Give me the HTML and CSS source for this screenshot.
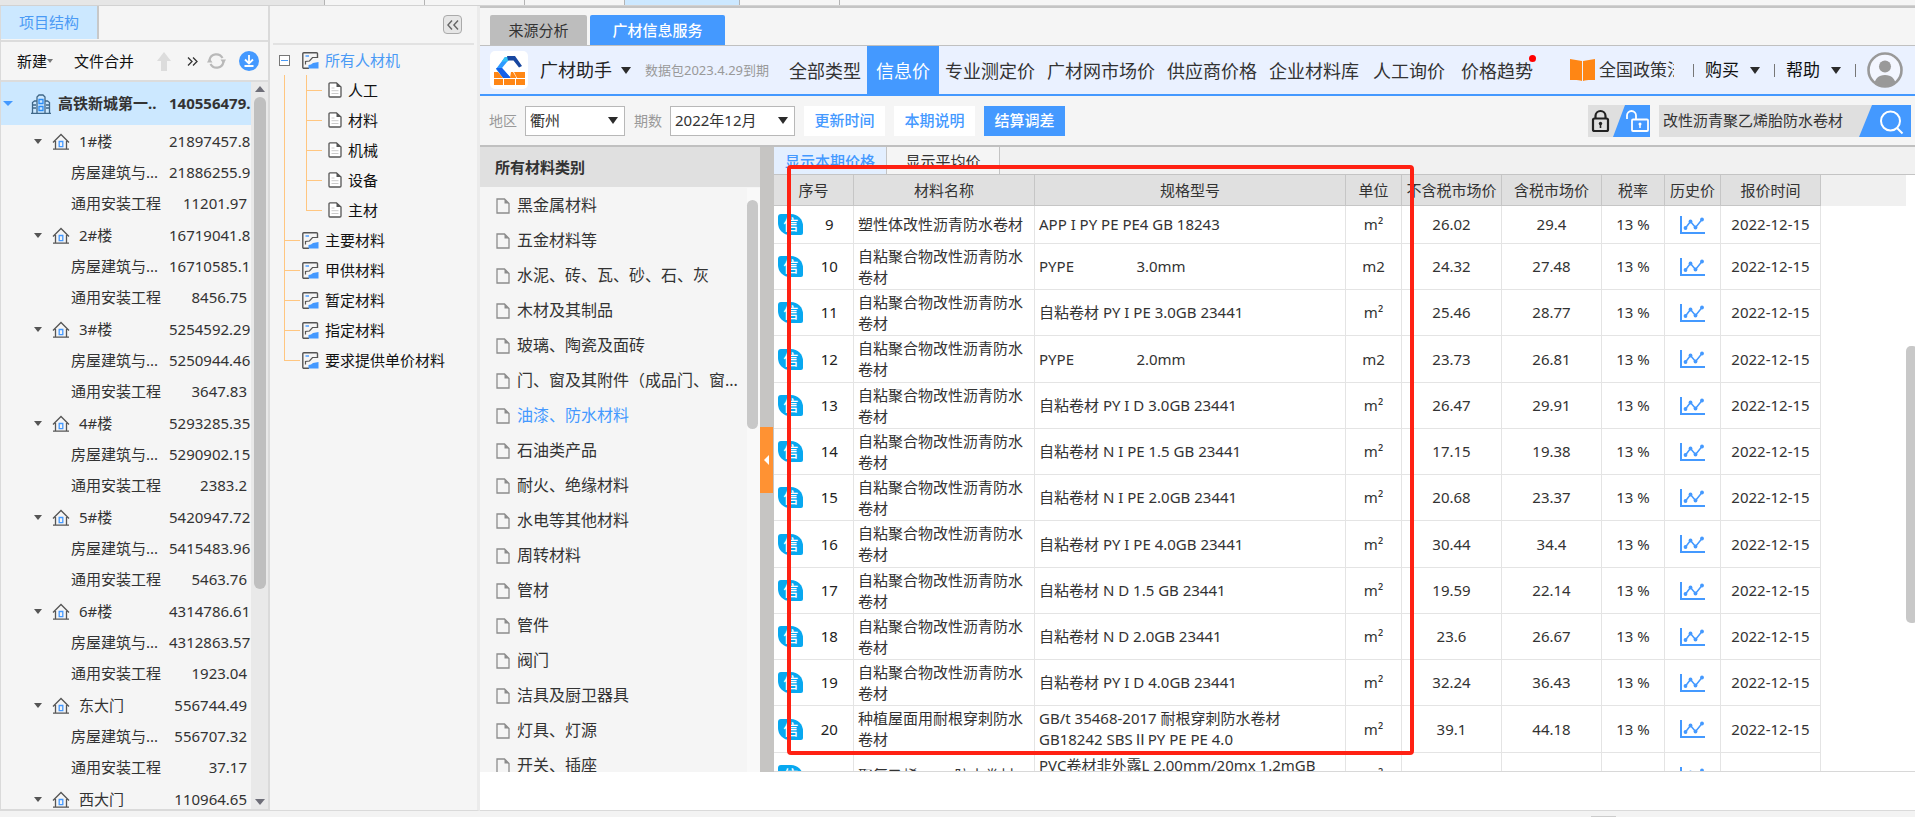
FILE: index.html
```html
<!DOCTYPE html>
<html lang="zh-CN">
<head>
<meta charset="utf-8">
<title>广材助手</title>
<link rel="stylesheet" href="styles.css">
</head>
<body>
<svg class="sprite" aria-hidden="true">
  <symbol id="i-house" viewBox="0 0 18 17"><path d="M1 9.5 9 1.5l8 8M3.5 8v8M14.5 8v8M1 16.2h16" fill="none" stroke="#555" stroke-width="1.3"/><path d="M7.2 8.5h3.6v5.2H7.2z" fill="none" stroke="#4499ff" stroke-width="1.3"/></symbol>
  <symbol id="i-tower" viewBox="0 0 20 20"><path d="M6 19V3l2-2h4l2 2v16M1.5 19V8.500l2-1.500H6M14 7h2.500l2 1.500V19M0 19.300h20M2 11h3M2 14h3M15 11h3M15 14h3" fill="none" stroke="#3f6788" stroke-width="1.300"/><path d="M8 5.500h4v4H8zM8 12.500h4v4H8z" fill="none" stroke="#2b8cf5" stroke-width="1.300"/></symbol>
  <symbol id="i-page" viewBox="0 0 14 16"><path d="M2 .8h6.500L13 5v9a1 1 0 0 1-1 1H2a1 1 0 0 1-1-1V1.800a1 1 0 0 1 1-1z" fill="#fff" stroke="#555" stroke-width="1.300"/><path d="M8.500.8V5H13z" fill="#555"/><path d="M3.500 6h3M3.500 8.700h7M3.500 11.500h7" stroke="#ccc"/></symbol>
  <symbol id="i-file" viewBox="0 0 14 16"><path d="M1 1h7.500L13 5.500V15H1z" fill="none" stroke="#8c8c8c" stroke-width="1.300"/><path d="M8.500 1v4.500H13z" fill="#8c8c8c"/></symbol>
  <symbol id="i-report" viewBox="0 0 17 17"><path d="M15.500 6V1.800a1 1 0 0 0-1-1H1.800a1 1 0 0 0-1 1v13.400a1 1 0 0 0 1 1H7" fill="none" stroke="#555" stroke-width="1.400"/><path d="M3.500 4h3.500" stroke="#4499ff" stroke-width="1.400"/><path d="M3.500 12.500V9.500l4-.500 3-3.500h5" fill="none" stroke="#555" stroke-width="1.200"/><path d="M6.500 16.500V13l2.500-.500 2-1.500 5.500-1v6.500z" fill="#4499ff"/></symbol>
  <symbol id="i-trend" viewBox="0 0 25 18"><path d="M1 0v17h24" fill="none" stroke="#4499ff" stroke-width="2"/><path d="m5.500 12 5-6.500 5 6 6.500-8" fill="none" stroke="#4499ff" stroke-width="1.500"/><g fill="#4499ff"><circle cx="5.500" cy="12" r="1.900"/><circle cx="10.500" cy="5.500" r="1.900"/><circle cx="15.500" cy="11.500" r="1.900"/><circle cx="22" cy="3.500" r="1.900"/></g></symbol>
</svg>

<div class="window-tabs"><span class="wt-0"></span><span class="wt-1"></span><span class="wt-1"></span><span class="wt-1"></span><span class="wt-2"></span><span class="wt-1"></span></div>

<main class="app">
  <aside class="project">
    <div class="project-tabs"><button class="project-tab">项目结构</button></div>
    <div class="project-tools">
      <button class="tool new">新建<i class="caret-small"></i></button>
      <button class="tool merge">文件合并</button>
      <button class="tool up" aria-label="上移"><svg width="14" height="19" viewBox="0 0 14 19"><path d="M7 0l7 9h-4v10H4V9H0z" fill="#dcdcdc"/></svg></button>
      <button class="tool more" aria-label="更多"><svg width="11" height="9" viewBox="0 0 11 9"><path d="m1 .5 4 4-4 4M6 .5l4 4-4 4" fill="none" stroke="#333" stroke-width="1.300"/></svg></button>
      <button class="tool sync" aria-label="刷新"><svg width="19" height="18" viewBox="0 0 19 18"><path d="M2.500 8a7 7 0 0 1 13-2M16.500 10a7 7 0 0 1-13 2" fill="none" stroke="#b9b9b9" stroke-width="2.200"/><path d="M0 10.500 2.500 6l3 4.500zM13.500 7.500h5.500L16.500 12z" fill="#b9b9b9"/></svg></button>
      <button class="tool down" aria-label="下载"><svg width="20" height="20" viewBox="0 0 20 20"><circle cx="10" cy="10" r="10" fill="#4499ff"/><path d="M10 4v8M6 8.500l4 4 4-4M5.500 15h9" fill="none" stroke="#fff" stroke-width="1.800"/></svg></button>
    </div>
    <div class="project-body">
      <div class="project-rows" id="project-rows">
        <div class="root-row"><i class="caret blue"></i><svg width="20" height="20"><use href="#i-tower"/></svg><span class="root-name">高铁新城第一..</span><span class="amount">140556479.</span></div>
      </div>
      <div class="project-scroll"><i class="arrow-up"></i><i class="thumb"></i><i class="arrow-down"></i></div>
    </div>
  </aside>

  <aside class="kinds">
    <div class="kinds-head"><button class="collapse" aria-label="收起"><svg width="12" height="10" viewBox="0 0 12 10"><path d="M5 .5.9 5 5 9.500M11 .5 6.900 5 11 9.500" fill="none" stroke="#666" stroke-width="1.400"/></svg></button></div>
    <div class="kind-root"><button class="minus" aria-label="折叠"></button><svg width="17" height="17"><use href="#i-report"/></svg><span>所有人材机</span></div>
    <div id="kind-rows"></div>
  </aside>

  <section class="service">
    <div class="service-tabs"><button class="stab gray">来源分析</button><button class="stab active">广材信息服务</button></div>
    <header class="bar">
      <span class="logo"><svg width="31" height="29" viewBox="0 0 31 29"><path d="M11 1h6L8 12l9 10h-8L2 13z" fill="#2f9bff"/><path d="M11 1h6l-3.500 4.500H7.700z" fill="#35c3f5"/><path d="M8 12h-6l7 10h8z" fill="#1560e8"/><path d="M13 0h8l7 10-3 1.500-5.500-7H14z" fill="#1746a0"/><g fill="#ff8614"><path d="M0 16h4l5 6H0zM20 16h11v6H23zM17 16h2l3 5v1h-6z"/><path d="M0 23h9v6H0zM10 23h11v6H10zM22 23h9v6h-9z"/></g></svg></span>
      <button class="brand">广材助手<i class="caret"></i></button>
      <span class="expiry">数据包2023.4.29到期</span>
      <nav class="nav">
        <a href="#">全部类型</a><a href="#" class="on">信息价</a><a href="#">专业测定价</a><a href="#">广材网市场价</a><a href="#">供应商价格</a><a href="#">企业材料库</a><a href="#" class="loose">人工询价</a><a href="#" class="loose">价格趋势<i class="dot"></i></a>
      </nav>
      <div class="account">
        <svg class="book" width="25" height="22" viewBox="0 0 25 22"><path d="M0 0c4 1 8 1 12 2v20c-4-1.500-8-1-12-1zM25 0c-4 1-8 1-12 2v20c4-1.500 8-1 12-1z" fill="#ff8614"/></svg>
        <a href="#" class="policy">全国政策法规</a>
        <i class="sep"></i><button class="menu">购买<i class="caret"></i></button>
        <i class="sep"></i><button class="menu">帮助<i class="caret"></i></button>
        <i class="sep"></i>
        <svg class="avatar" width="36" height="36" viewBox="0 0 36 36"><defs><clipPath id="face"><circle cx="18" cy="18" r="16"/></clipPath></defs><circle cx="18" cy="18" r="16.500" fill="#f3f6ff" stroke="#999" stroke-width="2.600"/><g fill="#999" clip-path="url(#face)"><circle cx="18" cy="14.500" r="6"/><path d="M7 36c0-9 4-13 11-13s11 4 11 13z"/></g></svg>
      </div>
    </header>
    <div class="filters">
      <label for="region">地区</label>
      <span class="pick region"><select id="region"><option>衢州</option></select><i class="caret"></i></span>
      <label for="period">期数</label>
      <span class="pick period"><select id="period"><option>2022年12月</option></select><i class="caret"></i></span>
      <button class="act">更新时间</button><button class="act">本期说明</button><button class="act solid">结算调差</button>
      <button class="locks" aria-label="锁定"><svg width="62" height="32" viewBox="0 0 62 32"><path d="M37 0h25v32H25z" fill="#4499ff"/><g fill="none" stroke="#222" stroke-width="2.200"><rect x="5" y="13.500" width="15" height="12.500" rx="1.500"/><path d="M7.500 13.500V11a5 5 0 0 1 10 0v2.500"/></g><circle cx="12.500" cy="18.500" r="1.700" fill="#222"/><path d="M12.500 19v4" stroke="#222" stroke-width="1.600"/><g fill="none" stroke="#fff" stroke-width="1.800"><rect x="44" y="14.500" width="16" height="11.500" rx="1"/><path d="M39 14v-3.500a4.500 4.500 0 0 1 9 0v4"/></g><circle cx="52" cy="19" r="1.500" fill="#fff"/><path d="M52 19v4" stroke="#fff" stroke-width="1.500"/></svg></button>
      <span class="search"><input type="text" aria-label="搜索材料" value="改性沥青聚乙烯胎防水卷材"><button aria-label="搜索"><svg width="52" height="32" viewBox="0 0 52 32"><path d="M13 0h39v32H0z" fill="#4499ff"/><circle cx="31.500" cy="16" r="9.500" fill="none" stroke="#fff" stroke-width="2"/><path d="m38 23 5.500 5.500" stroke="#fff" stroke-width="2"/></svg></button></span>
    </div>
    <div class="work">
      <div class="cats">
        <h2>所有材料类别</h2>
        <div class="cats-body"><ul id="cats"></ul><div class="cats-scroll"><i></i></div></div>
      </div>
      <div class="split"><button aria-label="收起分类"><i></i></button></div>
      <div class="prices">
        <div class="price-tabs"><button class="on">显示本期价格</button><button>显示平均价</button></div>
        <div class="price-body">
          <table>
            <colgroup><col class="c-no"><col class="c-name"><col class="c-spec"><col class="c-unit"><col class="c-price"><col class="c-price"><col class="c-rate"><col class="c-hist"><col class="c-date"></colgroup>
            <thead><tr><th>序号</th><th>材料名称</th><th>规格型号</th><th>单位</th><th>不含税市场价</th><th>含税市场价</th><th>税率</th><th>历史价</th><th>报价时间</th></tr></thead>
            <tbody id="prices"></tbody>
          </table>
          <div class="head-fill"></div>
          <div class="price-scroll"><i></i></div>
        </div>
        <div class="highlight"></div>
      </div>
    </div>
  </section>
</main>
<footer class="status"><i></i></footer>
<script src="app.js"></script>
</body>
</html>
```

FILE: styles.css
```css
* { box-sizing: border-box; }
body {
  margin: 0;
  height: 100vh;
  display: flex;
  flex-direction: column;
  overflow: hidden;
  background: #f5f5f5;
  color: #333;
  font: 15px/21px "Noto Sans", "Noto Sans CJK SC", sans-serif;
}
button, input, select { font: inherit; color: inherit; border: 0; padding: 0; margin: 0; background: none; border-radius: 0; }
a { color: inherit; text-decoration: none; }
ul { list-style: none; margin: 0; padding: 0; }
svg { display: block; flex: none; }
.sprite { position: absolute; width: 0; height: 0; }
.caret { display: inline-block; flex: none; border: 5px solid transparent; border-top: 7px solid #2b2b2b; border-bottom: 0; }
.caret.blue { border-width: 5px 5px 0; border-top-color: #4499ff; }

.window-tabs { flex: none; display: flex; height: 6px; border-bottom: 1px solid #d2d2d2; }
.window-tabs span { border-right: 1px solid #b4b4b4; }
.wt-0 { width: 325px; background: #e6e6e6; }
.wt-1 { width: 100px; }
.wt-2 { width: 115px; background: #cce8ff; }

.app { flex: 1; min-height: 0; display: flex; }

.project { width: 270px; flex: none; display: flex; flex-direction: column; border: solid #dadada; border-width: 0 2px 2px 1px; }
.project-tabs { height: 36px; flex: none; border-bottom: 2px solid #dcdcdc; }
.project-tab { width: 98px; height: 33px; background: #cce8ff; color: #4a9af5; border-right: 2px solid #c8c8c8; }
.project-tools { height: 40px; flex: none; display: flex; align-items: center; padding-left: 16px; border-bottom: 2px solid #dcdcdc; color: #111; }
.tool { display: flex; align-items: center; }
.new { width: 57px; }
.merge { width: 83px; }
.up { width: 30px; }
.more { width: 20px; }
.sync { width: 32px; }
.caret-small { border: 3px solid transparent; border-top: 4px solid #777; border-bottom: 0; }
.project-body { flex: 1; min-height: 0; display: flex; }
.project-rows { width: 250px; overflow: hidden; }
.root-row { height: 43px; display: flex; align-items: center; background: #cce8ff; padding-left: 2px; font-weight: 700; }
.root-row svg { margin: 0 7px 0 18px; }
.root-name { width: 111px; white-space: nowrap; }
.amount { width: 78px; flex: none; text-align: right; white-space: nowrap; }
.building, .part { display: flex; align-items: center; }
.building { height: 32px; padding-left: 33px; }
.building i { border: 4px solid transparent; border-top: 5px solid #555; border-bottom: 0; }
.building svg { margin: 0 9px 0 10px; }
.building b { width: 90px; font-weight: 400; }
.part { height: 31px; padding-left: 70px; }
.part b { width: 98px; font-weight: 400; white-space: nowrap; }
.project-scroll { width: 17px; background: #e9e9e9; display: flex; flex-direction: column; align-items: center; padding: 4px 0; }
.arrow-up { border: 5px solid transparent; border-bottom: 6px solid #6e6e78; border-top: 0; }
.arrow-down { border: 5px solid transparent; border-top: 6px solid #6e6e78; border-bottom: 0; margin-top: auto; }
.thumb { width: 12px; height: 492px; margin-top: 5px; border-radius: 6px; background: #bfbfbf; }

.kinds { width: 210px; flex: none; border-right: 3px solid #ebebeb; border-bottom: 1px solid #dadada; color: #111; }
.kinds-head { height: 39px; margin: 0 3px; padding: 9px 12px 0 0; border-bottom: 2px solid #e2e2e2; display: flex; justify-content: flex-end; align-items: flex-start; }
.collapse { width: 19px; height: 19px; border: 1px solid #aaa; border-radius: 4px; background: #e6e6e6; display: flex; align-items: center; justify-content: center; }
.kind-root { height: 30px; display: flex; align-items: center; padding-left: 9px; color: #4a9af5; }
.minus { width: 11px; height: 11px; margin-right: 12px; border: 1px solid #777; background: linear-gradient(#4a9af5, #4a9af5) center / 7px 1px no-repeat #fff; }
.kind-root span { margin-left: 6px; }
.kind { height: 30px; display: flex; align-items: center; padding-left: 14px; }
.guide { align-self: stretch; width: 16px; margin-right: 2px; background: linear-gradient(#ffc680, #ffc680) left top / 1px 100% no-repeat, linear-gradient(#ffc680, #ffc680) left center / 100% 1px no-repeat; }
.guide.line { width: 22px; margin: 0; background: linear-gradient(#ffc680, #ffc680) left top / 1px 100% no-repeat; }
.guide.leaf { margin-right: 6px; }
.guide.end { background-size: 1px 50%, 100% 1px; }
.kind b { margin-left: 6px; font-weight: 400; }

.service { flex: 1; min-width: 0; display: flex; flex-direction: column; border-top: 2px solid #c4c4c4; border-bottom: 1px solid #dadada; }
.service-tabs { height: 38px; flex: none; display: flex; align-items: flex-end; gap: 3px; padding-left: 10px; border-bottom: 1px solid #c0c0c0; }
.stab { height: 30px; border-radius: 2px 2px 0 0; }
.stab.gray { width: 97px; background: #bdbdbd; }
.stab.active { width: 135px; background: #4499ff; color: #fff; font-weight: 500; }

.bar { height: 50px; flex: none; display: flex; align-items: center; background: #eaf1ff; border-bottom: 2px solid #4499ff; padding-left: 10px; }
.logo { width: 38px; height: 38px; flex: none; border-radius: 5px; background: #fff; display: flex; align-items: center; justify-content: center; }
.brand { width: 105px; flex: none; margin-left: 12px; font-size: 18px; color: #222; display: flex; align-items: center; gap: 9px; white-space: nowrap; }
.expiry { width: 138px; flex: none; font-size: 13px; color: #999; white-space: nowrap; }
.nav { display: flex; align-self: stretch; flex: none; font-size: 18px; line-height: 50px; white-space: nowrap; }
.nav a { padding: 0 6px; }
.nav .on { padding: 0 9px; background: #4499ff; color: #fff; }
.nav .loose { padding: 0 8px; position: relative; }
.dot { position: absolute; right: 5px; top: 9px; width: 7px; height: 7px; border-radius: 50%; background: #f00; }
.account { margin-left: auto; padding-right: 12px; display: flex; align-items: center; font-size: 17px; line-height: 24px; white-space: nowrap; }
.policy { width: 75px; margin: 0 19px 0 4px; overflow: hidden; font-size: 17px; }
.sep { width: 1px; height: 13px; background: #777; }
.menu { width: 69px; margin-left: 11px; display: flex; align-items: center; gap: 11px; color: #111; }
.avatar { margin-left: 11px; }

.filters { height: 51px; flex: none; display: flex; align-items: center; padding: 0 4px 0 9px; border-bottom: 2px solid #c0c0c0; white-space: nowrap; }
.filters label { width: 36px; font-size: 14px; color: #999; }
.pick { height: 30px; display: flex; align-items: center; border: 1px solid #b8b8b8; background: #fff; margin-right: 9px; padding: 0 6px 0 4px; }
.pick select { appearance: none; flex: 1; min-width: 0; outline: 0; }
.region { width: 100px; }
.period { width: 125px; }
.act { height: 30px; width: 81px; margin-right: 9px; background: #fff; color: #4499ff; font-weight: 500; }
.act.solid { background: #4499ff; color: #fff; }
.locks { margin-left: auto; background: #dfdfdf; }
.search { width: 252px; height: 32px; margin-left: 9px; display: flex; background: #dfdfdf; }
.search input { flex: 1; min-width: 0; padding-left: 4px; outline: 0; }

.work { flex: 1; min-height: 0; display: flex; margin-bottom: 38px; background: #fff; box-shadow: 0 38px 0 #fff; }
.cats { width: 280px; flex: none; display: flex; flex-direction: column; background: #f5f5f5; }
.cats h2 { margin: 0; height: 40px; flex: none; padding-left: 15px; font-size: 15px; line-height: 40px; background: #e0e0e0; }
.cats-body { flex: 1; min-height: 0; display: flex; overflow: hidden; padding-top: 1px; }
.cats ul { flex: 1; min-width: 0; }
.cats li { height: 35px; display: flex; align-items: center; gap: 7px; padding-left: 16px; font-size: 16px; white-space: nowrap; }
.cats li.on { color: #4499ff; }
.cats-scroll { width: 13px; background: #f9f9f9; padding-top: 12px; }
.cats-scroll i { display: block; width: 11px; height: 229px; border-radius: 6px; background: #c8c8c8; }
.split { width: 14px; flex: none; background: #c6c5c3; }
.split button { width: 13px; height: 66px; margin-top: 280px; background: #ff9233; display: flex; align-items: center; justify-content: center; }
.split i { border: 5px solid transparent; border-right: 5px solid #fff; border-left: 0; }

.prices { flex: 1; min-width: 0; display: flex; flex-direction: column; position: relative; border-bottom: 1px solid #d8d8d8; }
.price-tabs { height: 28px; flex: none; display: flex; background: #f1f1f1; border-bottom: 1px solid #c4c4c4; }
.price-tabs button { width: 113px; padding-top: 2px; border-right: 1px solid #c4c4c4; background: #f5f5f5; }
.price-tabs .on { background: #e3efff; color: #4499ff; font-weight: 500; }
.price-body { flex: 1; min-height: 0; display: flex; overflow: hidden; }
.price-body table { table-layout: fixed; width: 1047px; flex: none; align-self: flex-start; border-collapse: separate; border-spacing: 0; }
.c-no { width: 80px; } .c-name { width: 181px; } .c-spec { width: 311px; } .c-unit { width: 56px; }
.c-price { width: 100px; } .c-rate { width: 63px; } .c-hist { width: 56px; } .c-date { width: 100px; }
th { height: 31px; padding: 0; font-weight: 400; background: #e0e0e0; border: solid #c6c6c6; border-width: 0 1px 1px 0; white-space: nowrap; }
td { height: 46px; padding: 1px 4px; border: solid #e4e4e4; border-width: 0 1px 1px 0; text-align: center; }
tr:nth-child(4n) td { height: 47px; }
tr.short td { height: 38px; }
td.left { text-align: left; white-space: pre-wrap; }
td.no div { display: flex; align-items: center; }
.no span { width: 48px; padding-left: 6px; color: #222; }
.badge { width: 27px; height: 21px; border-radius: 3px 12px 2px 12px; background: #08a8f0; color: #fff; font-style: normal; font-weight: 500; text-align: center; }
td svg { margin: auto; }
.head-fill { flex: 1; height: 31px; background: #f0f0f0; }
.price-scroll { width: 9px; padding-top: 171px; }
.price-scroll i { display: block; width: 12px; height: 277px; border-radius: 5px; background: #c8c8c8; }
.highlight { position: absolute; left: 13px; top: 18px; width: 627px; height: 590px; border: 4px solid #ff2113; border-radius: 4px; pointer-events: none; }

.status { height: 6px; flex: none; display: flex; align-items: flex-end; justify-content: flex-end; padding-right: 299px; background: #f3f3f3; }
.status i { width: 25px; height: 1px; background: #ccc; }
```

FILE: app.js
```js
const icon = (id, w, h) => `<svg width="${w}" height="${h}"><use href="#i-${id}"/></svg>`;

const buildings = [
  ['1#楼', '21897457.8', '21886255.9', '11201.97'],
  ['2#楼', '16719041.8', '16710585.1', '8456.75'],
  ['3#楼', '5254592.29', '5250944.46', '3647.83'],
  ['4#楼', '5293285.35', '5290902.15', '2383.2'],
  ['5#楼', '5420947.72', '5415483.96', '5463.76'],
  ['6#楼', '4314786.61', '4312863.57', '1923.04'],
  ['东大门', '556744.49', '556707.32', '37.17'],
  ['西大门', '110964.65'],
];
document.getElementById('project-rows').insertAdjacentHTML('beforeend', buildings.map(([name, total, civil, install]) =>
  `<div class="building"><i></i>${icon('house', 18, 17)}<b>${name}</b><span class="amount">${total}</span></div>` +
  (civil ? `<div class="part"><b>房屋建筑与...</b><span class="amount">${civil}</span></div>
  <div class="part"><b>通用安装工程</b><span class="amount">${install}</span></div>` : '')).join(''));

const leaves = ['人工', '材料', '机械', '设备', '主材'];
const kinds = ['主要材料', '甲供材料', '暂定材料', '指定材料', '要求提供单价材料'];
const end = (list, i) => (i === list.length - 1 ? ' end' : '');
document.getElementById('kind-rows').innerHTML =
  leaves.map((t, i) => `<div class="kind"><span class="guide line"></span><span class="guide leaf${end(leaves, i)}"></span>${icon('page', 14, 16)}<b>${t}</b></div>`).join('') +
  kinds.map((t, i) => `<div class="kind"><span class="guide${end(kinds, i)}"></span>${icon('report', 17, 17)}<b>${t}</b></div>`).join('');

const cats = ['黑金属材料', '五金材料等', '水泥、砖、瓦、砂、石、灰', '木材及其制品', '玻璃、陶瓷及面砖', '门、窗及其附件（成品门、窗...', '油漆、防水材料', '石油类产品', '耐火、绝缘材料', '水电等其他材料', '周转材料', '管材', '管件', '阀门', '洁具及厨卫器具', '灯具、灯源', '开关、插座'];
document.getElementById('cats').innerHTML = cats.map((t) =>
  `<li${t === '油漆、防水材料' ? ' class="on"' : ''}>${icon('file', 14, 16)}<span>${t}</span></li>`).join('');

const self = '自粘聚合物改性沥青防水卷材';
const gap = ' '.repeat(16);
const prices = [
  [9, '塑性体改性沥青防水卷材', 'APP I PY PE PE4 GB 18243', 'm²', '26.02', '29.4'],
  [10, self, `PYPE${gap}3.0mm`, 'm2', '24.32', '27.48'],
  [11, self, '自粘卷材 PY I PE 3.0GB 23441', 'm²', '25.46', '28.77'],
  [12, self, `PYPE${gap}2.0mm`, 'm2', '23.73', '26.81'],
  [13, self, '自粘卷材 PY I D 3.0GB 23441', 'm²', '26.47', '29.91'],
  [14, self, '自粘卷材 N I PE 1.5 GB 23441', 'm²', '17.15', '19.38'],
  [15, self, '自粘卷材 N I PE 2.0GB 23441', 'm²', '20.68', '23.37'],
  [16, self, '自粘卷材 PY I PE 4.0GB 23441', 'm²', '30.44', '34.4'],
  [17, self, '自粘卷材 N D 1.5 GB 23441', 'm²', '19.59', '22.14'],
  [18, self, '自粘卷材 N D 2.0GB 23441', 'm²', '23.6', '26.67'],
  [19, self, '自粘卷材 PY I D 4.0GB 23441', 'm²', '32.24', '36.43'],
  [20, '种植屋面用耐根穿刺防水卷材', 'GB/t 35468-2017 耐根穿刺防水卷材\nGB18242 SBSⅡPY PE PE 4.0', 'm²', '39.1', '44.18'],
  [21, '聚氯乙烯(PVC)防水卷材', 'PVC卷材非外露L 2.00mm/20mx 1.2mGB\n12952-2011', 'm²', '19.04', '21.52'],
];
document.getElementById('prices').innerHTML = prices.map(([no, name, spec, unit, net, gross]) =>
  `<tr${no === 9 ? ' class="short"' : ''}><td class="no"><div><i class="badge">信</i><span>${no}</span></div></td><td class="left">${name}</td><td class="left">${spec}</td><td>${unit}</td><td>${net}</td><td>${gross}</td><td>13 %</td><td>${icon('trend', 25, 18)}</td><td>2022-12-15</td></tr>`).join('');
```
